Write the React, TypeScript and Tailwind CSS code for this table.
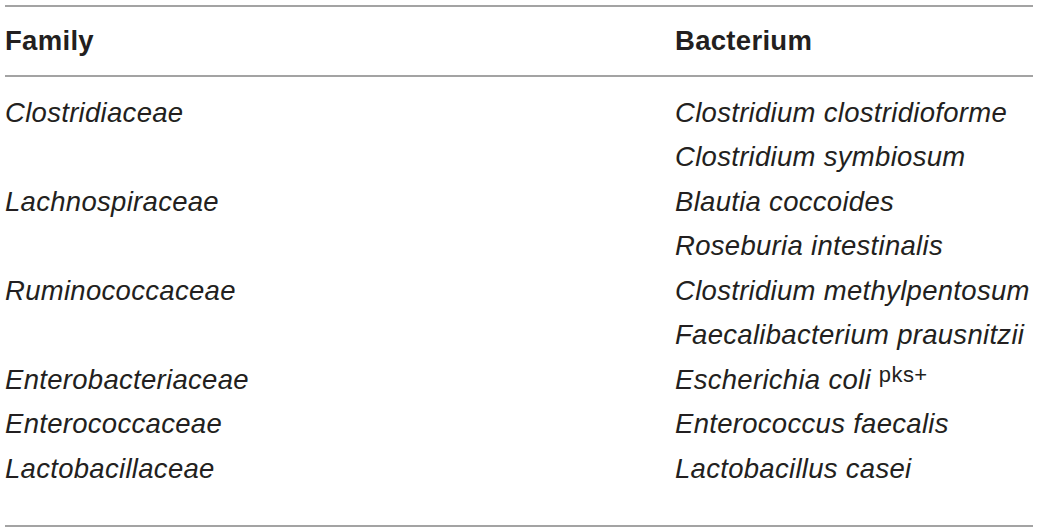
const rows: [string, string, string?][] = [
  ["Clostridiaceae", "Clostridium clostridioforme"],
  ["", "Clostridium symbiosum"],
  ["Lachnospiraceae", "Blautia coccoides"],
  ["", "Roseburia intestinalis"],
  ["Ruminococcaceae", "Clostridium methylpentosum"],
  ["", "Faecalibacterium prausnitzii"],
  ["Enterobacteriaceae", "Escherichia coli", "pks+"],
  ["Enterococcaceae", "Enterococcus faecalis"],
  ["Lactobacillaceae", "Lactobacillus casei"],
];

export default function App() {
  return (
    <div className="h-[532px] w-[1039px] bg-white pl-[5px] pr-[6px] pt-[5px] font-['Liberation_Sans',Arial,sans-serif] text-[27.5px] tracking-[0.3px] text-[#231f20]">
      <div className="border-y-2 border-[#a3a3a3]">
        <div className="grid h-[70px] grid-cols-[670px_1fr] items-center border-b-2 border-[#a3a3a3] font-bold">
          <div>Family</div>
          <div>Bacterium</div>
        </div>
        <div className="pb-[34px] pt-[13px]">
          {rows.map(([family, bacterium, sup], i) => (
            <div key={i} className="grid h-[44.5px] grid-cols-[670px_1fr] items-center italic">
              <div>{family}</div>
              <div>
                {bacterium}
                {sup && (
                  <span className="relative -top-[7px] ml-[8px] text-[22px] tracking-[0.4px] not-italic">
                    {sup}
                  </span>
                )}
              </div>
            </div>
          ))}
        </div>
      </div>
    </div>
  );
}
